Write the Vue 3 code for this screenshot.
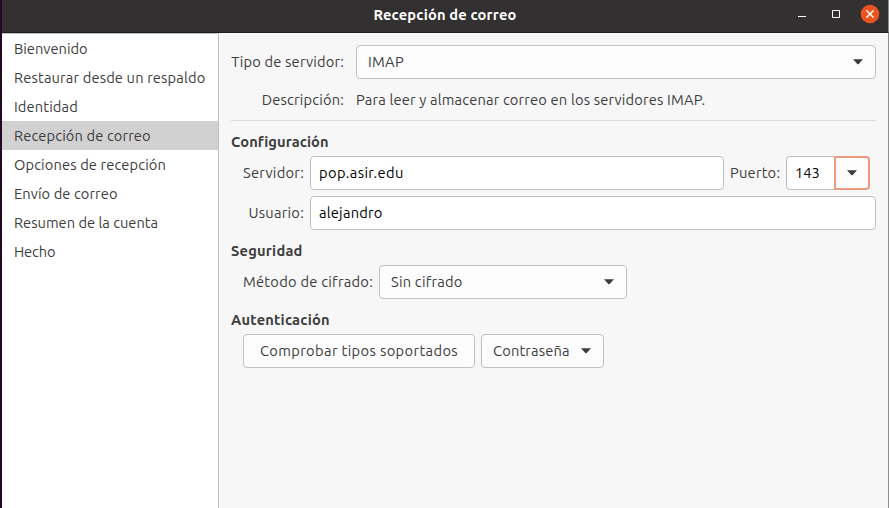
<script setup>
const steps = [
  { label: 'Bienvenido', fit: 's1' },
  { label: 'Restaurar desde un respaldo', fit: 's2' },
  { label: 'Identidad', fit: 's3' },
  { label: 'Recepción de correo', fit: 's4', active: true },
  { label: 'Opciones de recepción', fit: 's5' },
  { label: 'Envío de correo', fit: 's6' },
  { label: 'Resumen de la cuenta', fit: 's7' },
  { label: 'Hecho', fit: 's8' },
]
</script>

<template>
  <div class="window">
    <header class="titlebar">
      <h1 class="title">Recepción de correo</h1>
      <div class="controls">
        <svg class="min" width="8" height="10" viewBox="0 0 8 10"><path d="M0 8.5h8" stroke="#fff" /></svg>
        <svg class="max" width="8" height="8" viewBox="0 0 8 8"><path d="M.5.5h7v7h-7z" fill="none" stroke="#fff" /></svg>
        <svg class="close" width="20" height="20" viewBox="0 0 20 20">
          <circle cx="10" cy="10" r="9.3" fill="#e95420" />
          <path d="M6.5 6.5l7 7M13.5 6.5l-7 7" stroke="#fff" stroke-width="1.5" />
        </svg>
      </div>
    </header>
    <div class="body">
      <nav class="sidebar">
        <div v-for="s in steps" :key="s.label" class="step" :class="{ active: s.active }">
          <span :class="s.fit">{{ s.label }}</span>
        </div>
      </nav>
      <main class="content">
        <div class="row">
          <label class="type-label"><span class="f-type">Tipo de servidor:</span></label>
          <div class="box combo grow">
            <span class="f-imap">IMAP</span>
            <svg class="arrow" width="10" height="6" viewBox="0 0 10 6"><path d="M0 .3h10L5.7 5Q5 5.6 4.3 5z" /></svg>
          </div>
        </div>
        <div class="row desc">
          <label class="type-label"><span class="f-desc">Descripción:</span></label>
          <span class="f-para">Para leer y almacenar correo en los servidores IMAP.</span>
        </div>
        <div class="sep"></div>
        <h2 class="conf-title"><span class="f-conf">Configuración</span></h2>
        <div class="row">
          <label class="field-label"><span class="f-serv">Servidor:</span></label>
          <div class="box entry server"><span class="f-pop">pop.asir.edu</span></div>
          <label class="port-label"><span class="f-port">Puerto:</span></label>
          <div class="port">
            <div class="box entry port-entry"><span class="f-num">143</span></div>
            <div class="box port-btn">
              <svg class="arrow" width="10" height="6" viewBox="0 0 10 6"><path d="M0 .3h10L5.7 5Q5 5.6 4.3 5z" /></svg>
            </div>
          </div>
        </div>
        <div class="row user">
          <label class="field-label"><span class="f-user">Usuario:</span></label>
          <div class="box entry grow"><span class="f-alej">alejandro</span></div>
        </div>
        <h2 class="sec-title"><span class="f-seg">Seguridad</span></h2>
        <div class="row indent">
          <label class="method-label"><span class="f-met">Método de cifrado:</span></label>
          <div class="box combo method">
            <span class="f-sin">Sin cifrado</span>
            <svg class="arrow" width="10" height="6" viewBox="0 0 10 6"><path d="M0 .3h10L5.7 5Q5 5.6 4.3 5z" /></svg>
          </div>
        </div>
        <h2 class="auth-title"><span class="f-aut">Autenticación</span></h2>
        <div class="row indent buttons">
          <div class="box check"><span class="f-comp">Comprobar tipos soportados</span></div>
          <div class="box combo pass">
            <span class="f-contr">Contraseña</span>
            <svg class="arrow" width="10" height="6" viewBox="0 0 10 6"><path d="M0 .3h10L5.7 5Q5 5.6 4.3 5z" /></svg>
          </div>
        </div>
      </main>
    </div>
  </div>
</template>

<style>
body { margin: 0; overflow: hidden; background: #2c001e; }
</style>

<style scoped>
* { box-sizing: border-box; }
.window {
  width: 889px;
  height: 508px;
  display: flex;
  flex-direction: column;
  border-left: 2px solid #240a20;
  font: 14.67px/20px "Ubuntu", "Noto Sans", "Open Sans", sans-serif;
  color: #3d3d3d;
  white-space: nowrap;
}
.titlebar {
  height: 33px;
  flex: none;
  display: grid;
  grid-template-columns: 1fr auto 1fr;
  align-items: center;
  background: #323030;
  border-bottom: 1px solid #1f1e1e;
  border-right: 1px solid #8d8d8d;
  padding-bottom: 4px;
  color: #fff;
}
.title { grid-column: 2; margin: 0; padding-top: 1px; font-size: 14.67px; font-weight: 700; line-height: 20px; letter-spacing: .18px; }
.controls { display: flex; align-items: center; justify-content: flex-end; padding-right: 8px; }
.min { margin-right: 26px; margin-bottom: 2px; }
.max { margin-right: 20px; }
svg { display: block; flex: none; }
.body { flex: 1; display: flex; min-height: 0; }
.sidebar { width: 217px; flex: none; background: #fff; border-top: 1px solid #c2c2c2; border-right: 1px solid #c0c0c0; }
.step { height: 29px; padding-left: 12px; line-height: 30px; }
.active { background: #d1d1d1; }
.content { flex: 1; background: #f7f7f7; border-right: 1px solid #8d8d8d; padding: 12px 12px 0; }
.row { display: flex; align-items: center; }
label { text-align: right; flex: none; }
.type-label { width: 113px; margin-right: 12px; }
.box {
  height: 34px;
  display: flex;
  align-items: center;
  border: 1px solid #c0c0c0;
  border-radius: 4px;
  background: #fcfcfc;
}
.combo { justify-content: space-between; padding: 0 12px 0 11px; }
.entry { background: #fff; color: #000; padding-left: 8px; }
.grow { flex: 1; }
.arrow { fill: #3d3d3d; }
.desc { height: 20px; margin-top: 11px; }
.sep { height: 1px; background: #dcdcdc; margin-top: 10px; }
h2 { margin: 0; font-size: 14.67px; font-weight: 700; line-height: 20px; }
.conf-title { margin-top: 11px; margin-bottom: 4px; }
.field-label { width: 73px; margin-right: 6px; }
.server { width: 414px; }
.port-label { width: 50px; margin: 0 6px; }
.port { display: flex; }
.port-entry { width: 48px; border-right: 0; border-radius: 4px 0 0 4px; }
.port-btn { width: 36px; justify-content: center; border: 2px solid #eb9a7f; border-radius: 0 4px 4px 0; }
.user { margin-top: 6px; }
.sec-title { margin-top: 11px; margin-bottom: 4px; }
.indent { padding-left: 12px; }
.method-label { width: 130px; margin-right: 6px; }
.method { width: 248px; }
.auth-title { margin-top: 11px; margin-bottom: 4px; }
.buttons { gap: 6px; }
.check { width: 232px; justify-content: center; }
.pass { width: 123px; }

/* tracking per label */
.s2 { letter-spacing: .15px; }
.s3, .s4, .s5 { letter-spacing: .12px; }
.s6 { letter-spacing: .08px; }
.s8 { letter-spacing: -.1px; }
.f-type, .f-desc, .f-para, .f-contr { letter-spacing: .17px; }
.f-imap { letter-spacing: .3px; }
.f-conf { letter-spacing: .07px; }
.f-serv, .f-user, .f-met { letter-spacing: .25px; }
.f-pop { letter-spacing: .38px; }
.f-port, .f-alej, .f-sin, .f-seg, .f-aut { letter-spacing: .22px; }
.f-comp { letter-spacing: .37px; }
</style>
